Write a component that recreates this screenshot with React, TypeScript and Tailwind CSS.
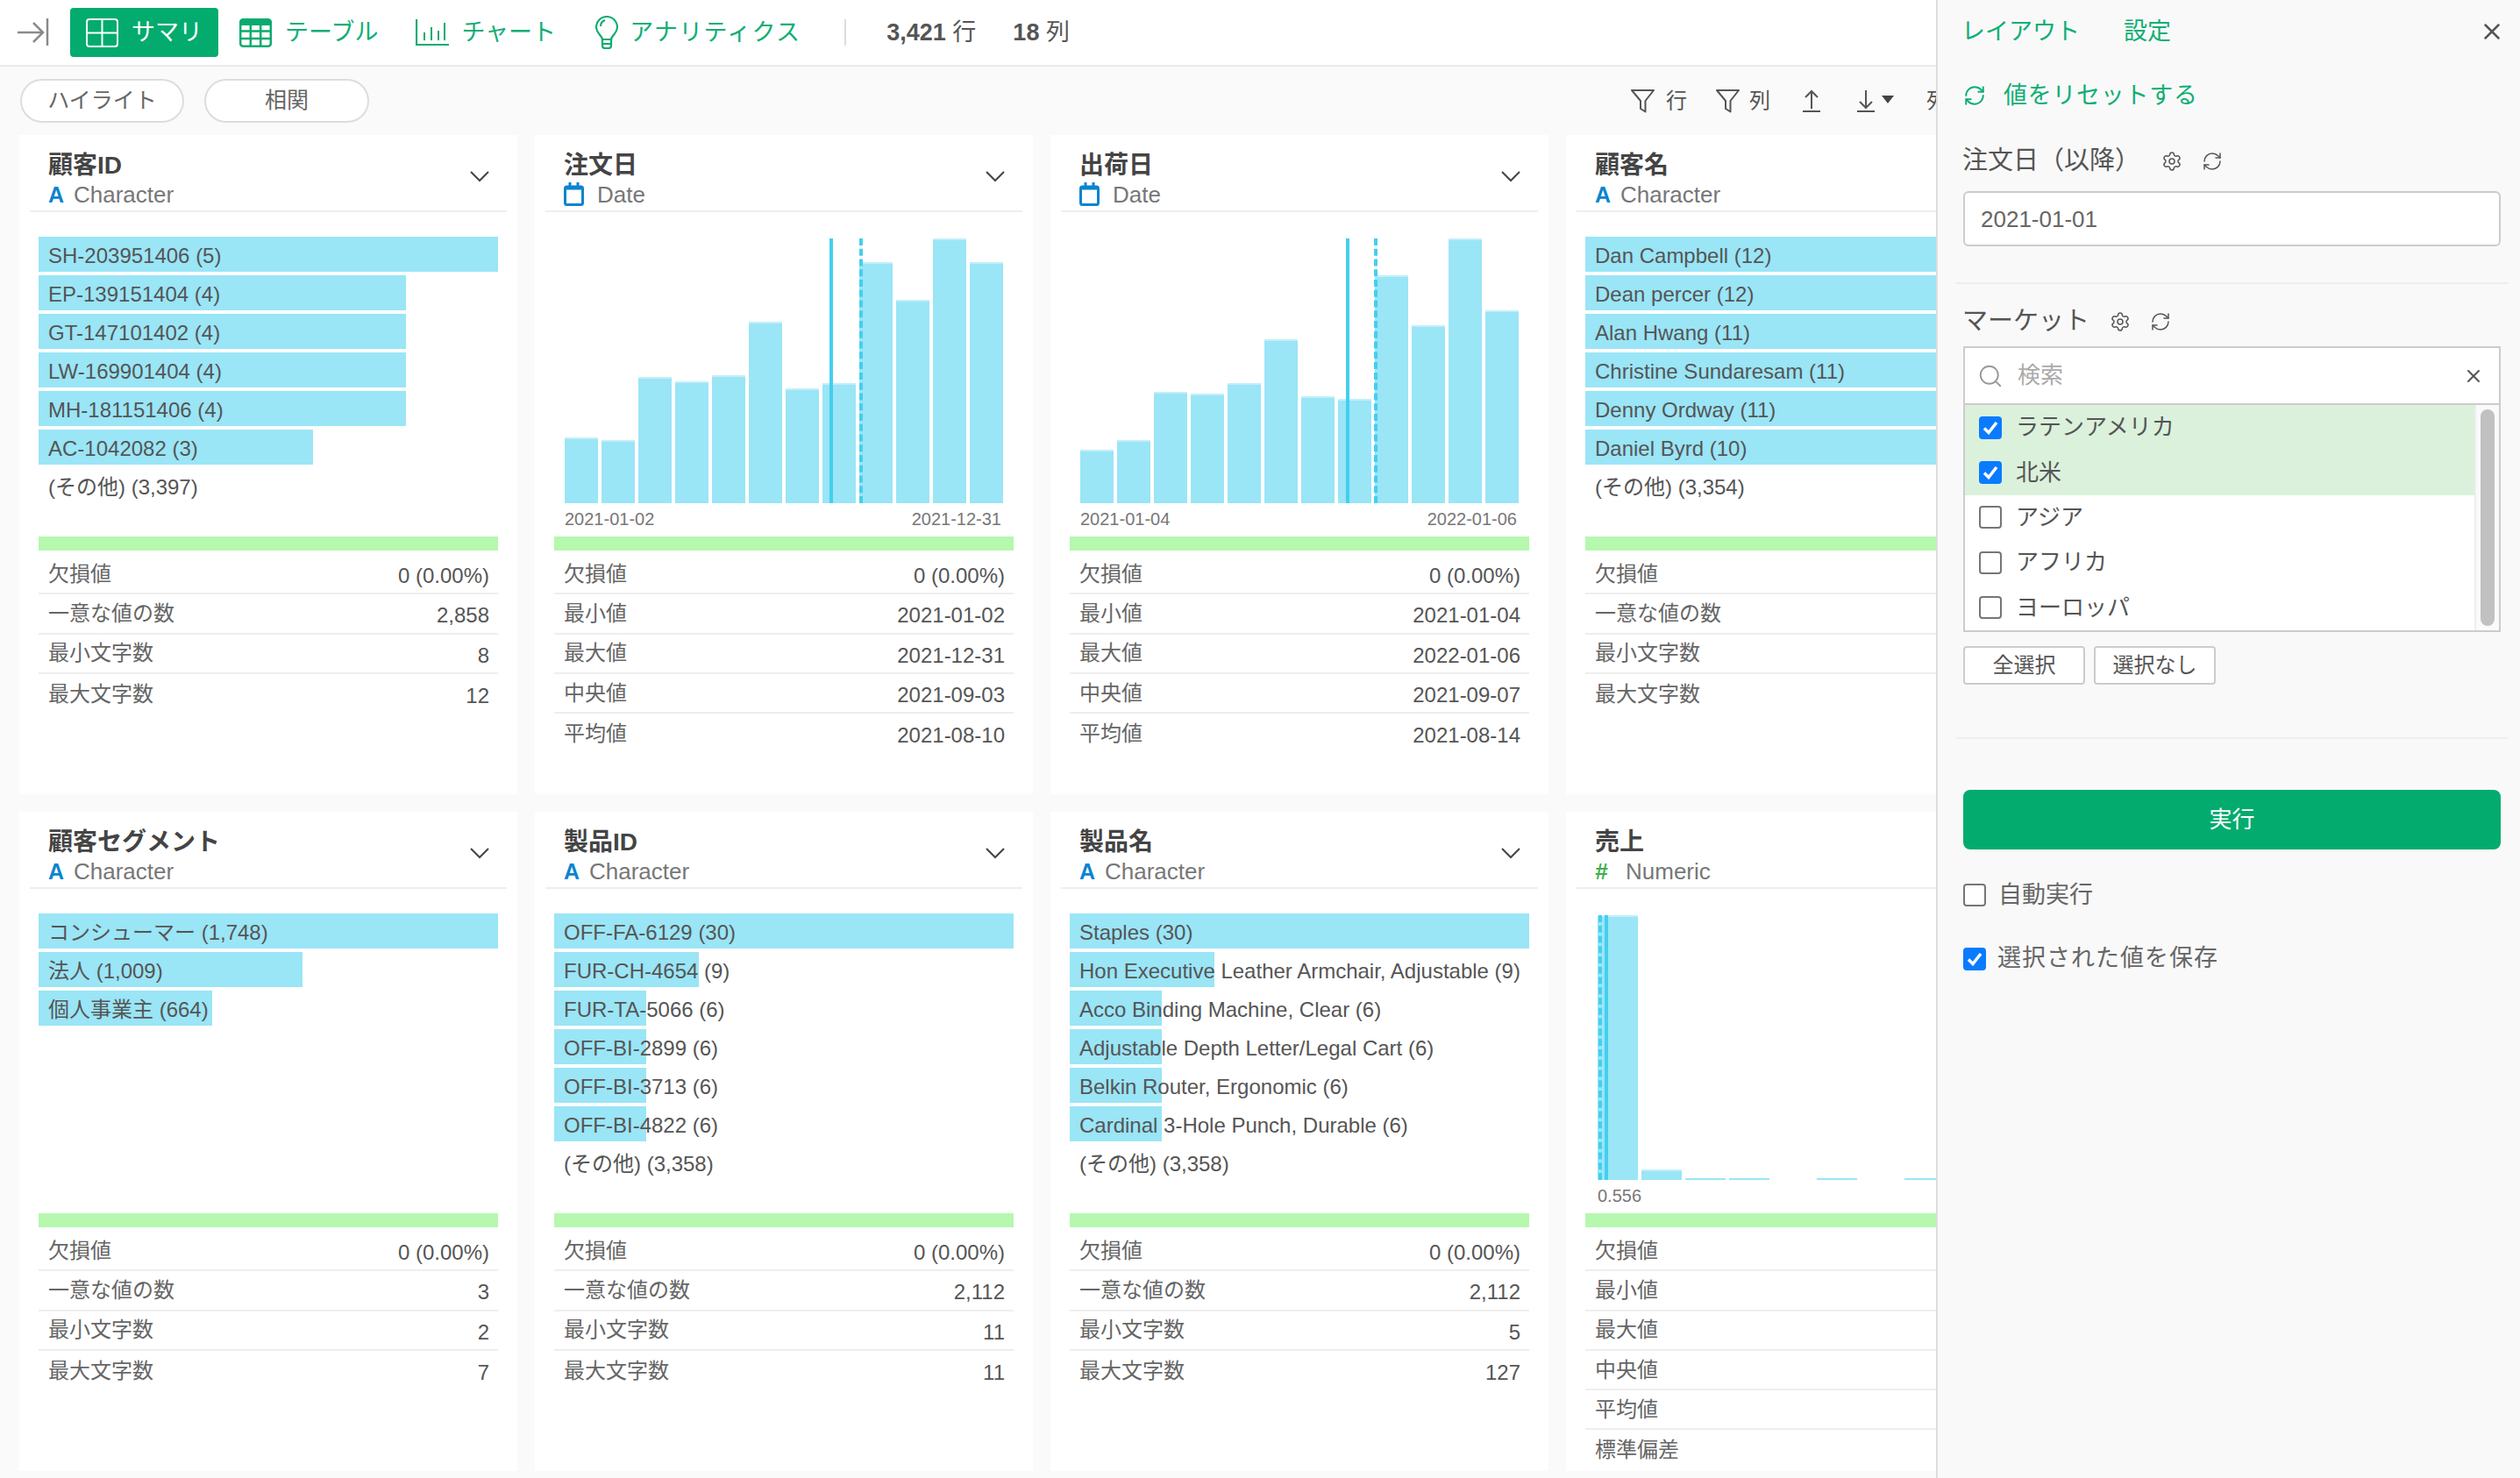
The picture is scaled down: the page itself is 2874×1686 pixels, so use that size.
import { RefreshCw, Search, Settings, X } from 'lucide-react'

type Stat = [string, string]
type Col = {
  title: string
  type: 'char' | 'date' | 'num'
  bars?: [string, number][]
  other?: string
  hist?: { heights: number[]; width: number; pitch: number; solid: number; dashed: number; left?: string; right?: string; pad: number }
  stats: Stat[]
}

const missing: Stat = ['欠損値', '0 (0.00%)']

const columns: Col[] = [
  {
    title: '顧客ID',
    type: 'char',
    bars: [['SH-203951406 (5)', 524], ['EP-139151404 (4)', 419], ['GT-147101402 (4)', 419], ['LW-169901404 (4)', 419], ['MH-181151406 (4)', 419], ['AC-1042082 (3)', 313]],
    other: '(その他) (3,397)',
    stats: [missing, ['一意な値の数', '2,858'], ['最小文字数', '8'], ['最大文字数', '12']],
  },
  {
    title: '注文日',
    type: 'date',
    hist: { heights: [75, 72, 144, 139, 146, 207, 131, 137, 275, 232, 302, 275], width: 38, pitch: 42, solid: 302, dashed: 336, left: '2021-01-02', right: '2021-12-31', pad: 34 },
    stats: [missing, ['最小値', '2021-01-02'], ['最大値', '2021-12-31'], ['中央値', '2021-09-03'], ['平均値', '2021-08-10']],
  },
  {
    title: '出荷日',
    type: 'date',
    hist: { heights: [61, 72, 127, 125, 137, 187, 122, 119, 260, 203, 302, 220], width: 38, pitch: 42, solid: 303, dashed: 335, left: '2021-01-04', right: '2022-01-06', pad: 34 },
    stats: [missing, ['最小値', '2021-01-04'], ['最大値', '2022-01-06'], ['中央値', '2021-09-07'], ['平均値', '2021-08-14']],
  },
  {
    title: '顧客名',
    type: 'char',
    bars: [['Dan Campbell (12)', 524], ['Dean percer (12)', 524], ['Alan Hwang (11)', 480], ['Christine Sundaresam (11)', 480], ['Denny Ordway (11)', 480], ['Daniel Byrd (10)', 437]],
    other: '(その他) (3,354)',
    stats: [['欠損値', ''], ['一意な値の数', ''], ['最小文字数', ''], ['最大文字数', '']],
  },
  {
    title: '顧客セグメント',
    type: 'char',
    bars: [['コンシューマー (1,748)', 524], ['法人 (1,009)', 301], ['個人事業主 (664)', 198]],
    stats: [missing, ['一意な値の数', '3'], ['最小文字数', '2'], ['最大文字数', '7']],
  },
  {
    title: '製品ID',
    type: 'char',
    bars: [['OFF-FA-6129 (30)', 524], ['FUR-CH-4654 (9)', 165], ['FUR-TA-5066 (6)', 105], ['OFF-BI-2899 (6)', 105], ['OFF-BI-3713 (6)', 105], ['OFF-BI-4822 (6)', 105]],
    other: '(その他) (3,358)',
    stats: [missing, ['一意な値の数', '2,112'], ['最小文字数', '11'], ['最大文字数', '11']],
  },
  {
    title: '製品名',
    type: 'char',
    bars: [['Staples (30)', 524], ['Hon Executive Leather Armchair, Adjustable (9)', 165], ['Acco Binding Machine, Clear (6)', 105], ['Adjustable Depth Letter/Legal Cart (6)', 105], ['Belkin Router, Ergonomic (6)', 105], ['Cardinal 3-Hole Punch, Durable (6)', 105]],
    other: '(その他) (3,358)',
    stats: [missing, ['一意な値の数', '2,112'], ['最小文字数', '5'], ['最大文字数', '127']],
  },
  {
    title: '売上',
    type: 'num',
    hist: { heights: [302, 12, 2, 2, 0, 2, 0, 2], width: 46, pitch: 50, solid: 8, dashed: 1, left: '0.556', pad: 36 },
    stats: [['欠損値', ''], ['最小値', ''], ['最大値', ''], ['中央値', ''], ['平均値', ''], ['標準偏差', '']],
  },
]

function Collapse() {
  return (
    <svg width="36" height="32" viewBox="0 0 36 32" fill="none" stroke="#8a8a8a" strokeWidth="2.5">
      <path d="M0 16h29M18 5l11 11-11 11M34 0v31" />
    </svg>
  )
}

function SummaryIcon() {
  return (
    <svg width="37" height="33" viewBox="0 0 37 33" fill="none" stroke="#fff" strokeWidth="2">
      <rect x="1" y="1" width="35" height="31" rx="3" />
      <path d="M18.5 1v31M1 16.5h35" />
    </svg>
  )
}

function TableIcon() {
  return (
    <svg width="37" height="33" viewBox="0 0 37 33" fill="none" stroke="#0bab70" strokeWidth="2.5">
      <rect x="1.2" y="1.2" width="34.6" height="30.6" rx="3" />
      <path d="M1 5h35" strokeWidth="6" />
      <path d="M12.8 1v31M24.2 1v31M1 14.5h35M1 23h35" />
    </svg>
  )
}

function ChartIcon() {
  return (
    <svg width="38" height="30" viewBox="0 0 38 30" fill="none" stroke="#0bab70" strokeWidth="2">
      <path d="M1 0v29h37" strokeWidth="2.2" />
      <path d="M10 24v-9M18 24V9M26 24V13M33 24V4" />
    </svg>
  )
}

function BulbIcon() {
  return (
    <svg width="26" height="38" viewBox="0 0 26 38" fill="none" stroke="#0bab70" strokeWidth="2.2">
      <path d="M8 27c0-4-7-7-7-14a12 12 0 0 1 24 0c0 7-7 10-7 14z" />
      <path d="M6 12c0-3 2-6 5-7" />
      <path d="M8 27v7c0 2 1 3 3 3h4c2 0 3-1 3-3v-7M8 32h10" />
    </svg>
  )
}

function FilterIcon() {
  return (
    <svg width="27" height="27" viewBox="0 0 27 27" fill="none" stroke="#555" strokeWidth="2" strokeLinejoin="round">
      <path d="M1 1h25L16.500 13v12.500L11 22v-9z" />
    </svg>
  )
}

function ArrowUp() {
  return (
    <svg width="20" height="26" viewBox="0 0 20 26" fill="none" stroke="#555" strokeWidth="2">
      <path d="M10 22V2M3 9l7-7 7 7M0 25h20" />
    </svg>
  )
}

function ArrowDown() {
  return (
    <svg width="20" height="26" viewBox="0 0 20 26" fill="none" stroke="#555" strokeWidth="2">
      <path d="M10 1v20M3 14l7 7 7-7M0 25h20" />
    </svg>
  )
}

function CalendarIcon() {
  return (
    <svg width="23" height="27" viewBox="0 0 23 27" fill="none" stroke="#0a84cf">
      <rect x="1.500" y="5" width="20" height="20.500" rx="2" strokeWidth="3" />
      <path d="M1.500 6.500h20" strokeWidth="4" />
      <path d="M7 0v5M16 0v5" strokeWidth="3" />
    </svg>
  )
}

function TypeLabel({ type }: { type: Col['type'] }) {
  if (type === 'date') {
    return (
      <div className="flex items-center gap-[15px] text-[26px] text-[#777]">
        <CalendarIcon />
        Date
      </div>
    )
  }
  if (type === 'num') {
    return (
      <div className="flex items-center gap-[15px] text-[26px] text-[#777]">
        <span className="w-[20px] font-bold italic text-[#3fae49]">#</span>
        Numeric
      </div>
    )
  }
  return (
    <div className="flex items-center gap-[11px] text-[26px] text-[#777]">
      <span className="w-[18px] text-[25px] font-bold text-[#0a84cf]">A</span>
      Character
    </div>
  )
}

function Histogram({ hist }: { hist: NonNullable<Col['hist']> }) {
  return (
    <div className="pt-[30px]" style={{ paddingLeft: hist.pad }}>
      <div className="relative flex h-[302px] items-end">
        {hist.heights.map((h, i) => (
          <div
            key={i}
            className="shrink-0 border-t-2 border-[#c2effa] bg-[#9ae5f6]"
            style={{ width: hist.width, height: h, marginRight: hist.pitch - hist.width, borderTopWidth: h > 4 ? 2 : 0 }}
          />
        ))}
        <div className="absolute top-0 bottom-0 w-1 bg-[#44cfee]" style={{ left: hist.solid }} />
        <div
          className="absolute top-0 bottom-0 w-1 border-l-4 border-dashed border-[#44cfee]"
          style={{ left: hist.dashed }}
        />
      </div>
      <div className="flex w-[498px] justify-between pt-[6px] text-[20px] leading-[24px] text-[#777]">
        <span>{hist.left}</span>
        <span>{hist.right}</span>
      </div>
    </div>
  )
}

function Card({ col }: { col: Col }) {
  return (
    <div className="h-[752px] w-[568px] bg-white">
      <div className="mx-[12px] flex h-[88px] items-center justify-between border-b-2 border-[#eee] pr-[20px] pl-[21px]">
        <div className="pt-[11px]">
          <div className="pt-[3px] text-[28px] leading-[35px] font-bold text-[#444]">{col.title}</div>
          <div className="h-[32px] leading-[32px]">
            <TypeLabel type={col.type} />
          </div>
        </div>
        <svg width="22" height="13" viewBox="0 0 22 13" fill="none" stroke="#444" strokeWidth="2" className="mt-[8px]">
          <path d="M1 1l10 10L21 1" />
        </svg>
      </div>
      <div className="h-[370px]">
        {col.bars && (
          <div className="flex flex-col gap-1 pt-[28px] pl-[22px] text-[24px] whitespace-nowrap text-[#555]">
            {col.bars.map(([label, w]) => (
              <div key={label} className="h-10 bg-[#9ae5f6] pl-[11px] leading-[44px]" style={{ width: w }}>
                {label}
              </div>
            ))}
            {col.other && <div className="h-10 pl-[11px] leading-[44px]">{col.other}</div>}
          </div>
        )}
        {col.hist && <Histogram hist={col.hist} />}
      </div>
      <div className="mx-[22px] h-[16px] bg-[#b5f8ae]" />
      <div className="mx-[22px] pt-[5px] text-[24px] text-[#555]">
        {col.stats.map(([k, v], i) => (
          <div
            key={k}
            className={
              i < col.stats.length - 1
                ? 'flex h-[45.3px] items-center justify-between border-b-2 border-[#eee] pr-[10px] pl-[11px]'
                : 'flex h-[45.3px] items-center justify-between pr-[10px] pl-[11px]'
            }
          >
            <span className="text-[#666]">{k}</span>
            <span className="mt-[5px]">{v}</span>
          </div>
        ))}
      </div>
    </div>
  )
}

function Check({ on }: { on?: boolean }) {
  if (!on) return <div className="h-[26px] w-[26px] shrink-0 rounded-[4px] border-2 border-[#767676] bg-white" />
  return (
    <div className="flex h-[26px] w-[26px] shrink-0 items-center justify-center rounded-[4px] bg-[#0a7bff]">
      <svg width="18" height="16" viewBox="0 0 18 16" fill="none" stroke="#fff" strokeWidth="3.500">
        <path d="M2 8.500l5 5L16 2" />
      </svg>
    </div>
  )
}

const markets: [string, boolean][] = [
  ['ラテンアメリカ', true],
  ['北米', true],
  ['アジア', false],
  ['アフリカ', false],
  ['ヨーロッパ', false],
]

function SidePanel() {
  return (
    <aside className="h-[1686px] w-[666px] shrink-0 border-l-2 border-[#ddd] bg-[#f9f9f9] pr-[22px] pl-[29px] text-[#555]">
      <div className="flex h-[72px] items-center justify-between text-[27px] text-[#0fae74]">
        <div className="ml-[-2px] flex gap-[50px]">
          <span>レイアウト</span>
          <span>設定</span>
        </div>
        <X size={30} strokeWidth={2} className="mr-[-5px] text-[#555]" />
      </div>
      <div className="flex h-[74px] items-center gap-[20px] text-[27px] tracking-[0.7px] text-[#0fae74]">
        <RefreshCw size={26} strokeWidth={1.8} />
        値をリセットする
      </div>
      <div className="ml-[-1px] flex h-[72px] items-center pt-[3px] text-[29px]">
        注文日（以降）
        <Settings size={24} strokeWidth={1.5} className="ml-[24px]" />
        <RefreshCw size={24} strokeWidth={1.5} className="ml-[22px]" />
      </div>
      <div className="h-[63px] rounded-[6px] border-2 border-[#ccc] bg-white pl-[18px] text-[26px] leading-[61px] text-[#666]">
        2021-01-01
      </div>
      <div className="mx-[-9px] mt-[41px] h-[2px] bg-[#eee]" />
      <div className="ml-[-1px] flex h-[71px] items-center pt-[15px] text-[29px]">
        マーケット
        <Settings size={24} strokeWidth={1.5} className="ml-[23px]" />
        <RefreshCw size={24} strokeWidth={1.5} className="ml-[22px]" />
      </div>
      <div className="border-2 border-[#ccc] bg-white">
        <div className="flex h-[65px] items-center border-b-2 border-[#ccc] pr-[17px] pl-[14px] text-[26px] text-[#aaa]">
          <Search size={30} strokeWidth={1.5} className="text-[#999]" />
          <span className="ml-[16px] flex-1">検索</span>
          <X size={24} strokeWidth={2} className="text-[#555]" />
        </div>
        <div className="flex">
          <div className="flex-1">
            {markets.map(([m, on]) => (
              <div
                key={m}
                className={
                  on
                    ? 'flex h-[51.400px] items-center gap-[16px] bg-[#dbf1dc] pl-[16px] text-[26px]'
                    : 'flex h-[51.400px] items-center gap-[16px] pl-[16px] text-[26px]'
                }
              >
                <Check on={on} />
                {m}
              </div>
            ))}
          </div>
          <div className="w-[28px] border-l-2 border-[#eee] bg-[#fafafa] px-[5px] py-[5px]">
            <div className="h-full rounded-full bg-[#c1c1c1]" />
          </div>
        </div>
      </div>
      <div className="mt-[16px] flex gap-[10px] text-[24px]">
        <div className="flex h-[44px] w-[139px] items-center justify-center rounded-[4px] border-2 border-[#ccc] bg-white">全選択</div>
        <div className="flex h-[44px] w-[139px] items-center justify-center rounded-[4px] border-2 border-[#ccc] bg-white">選択なし</div>
      </div>
      <div className="mx-[-9px] mt-[60px] h-[2px] rounded-full bg-[#eee]" />
      <div className="mt-[58px] flex h-[68px] items-center justify-center rounded-[8px] bg-[#03ab6e] pt-[2px] text-[26px] text-white">
        実行
      </div>
      <div className="mt-[32px] flex items-center gap-[14px] text-[27px] text-[#666]">
        <Check />
        自動実行
      </div>
      <div className="mt-[32px] flex items-center gap-[13px] text-[27px] tracking-[1px] text-[#666]">
        <Check on />
        選択された値を保存
      </div>
    </aside>
  )
}

export default function App() {
  return (
    <div className="flex h-[1686px] w-[2874px] overflow-hidden bg-[#fafafa] [font-family:Liberation_Sans,Noto_Sans_CJK_JP,sans-serif]">
      <main className="w-[2208px] shrink-0 overflow-hidden">
        {/* Top bar */}
        <div className="flex h-[76px] items-center border-b-2 border-[#eaeaea] bg-white pl-[20px] text-[27px] text-[#0fae74]">
          <Collapse />
          <div className="ml-[24px] flex h-[56px] w-[169px] items-center gap-[15px] rounded-[4px] bg-[#03ab6e] pl-[18px] text-white">
            <SummaryIcon />
            サマリ
          </div>
          <div className="ml-[24px] flex items-center gap-[15px]">
            <TableIcon />
            テーブル
          </div>
          <div className="ml-[43px] flex items-center gap-[14px]">
            <ChartIcon />
            チャート
          </div>
          <div className="ml-[45px] flex items-center gap-[13px]">
            <BulbIcon />
            <span className="tracking-[1.3px]">アナリティクス</span>
          </div>
          <div className="ml-[50px] h-[30px] w-[2px] bg-[#ddd]" />
          <div className="ml-[46px] text-[#555]">
            <span className="font-bold">3,421</span> 行
          </div>
          <div className="ml-[42px] text-[#555]">
            <span className="font-bold">18</span> 列
          </div>
        </div>
        {/* Sub bar */}
        <div className="flex h-[78px] items-center pl-[23px] text-[25px] whitespace-nowrap text-[#666]">
          <div className="flex h-[50px] w-[187px] shrink-0 items-center justify-center rounded-full border-2 border-[#ddd] bg-white">ハイライト</div>
          <div className="ml-[23px] flex h-[50px] w-[188px] shrink-0 items-center justify-center rounded-full border-2 border-[#ddd] bg-white">相関</div>
          <div className="ml-[1439px] flex shrink-0 items-center text-[24px] text-[#555]">
            <FilterIcon />
            <span className="ml-[13px]">行</span>
            <span className="ml-[33px]"><FilterIcon /></span>
            <span className="ml-[11px]">列</span>
            <span className="ml-[37px]"><ArrowUp /></span>
            <span className="ml-[42px]"><ArrowDown /></span>
            <span className="mb-[4px] ml-[8px] h-0 w-0 border-x-[7px] border-t-[9px] border-x-transparent border-t-[#444]" />
            <span className="ml-[37px]">列</span>
          </div>
        </div>
        {/* Column cards */}
        <div className="grid w-max grid-cols-[568px_568px_568px_568px] gap-5 pl-[22px]">
          {columns.map((col) => (
            <Card key={col.title} col={col} />
          ))}
        </div>
      </main>
      <SidePanel />
    </div>
  )
}
